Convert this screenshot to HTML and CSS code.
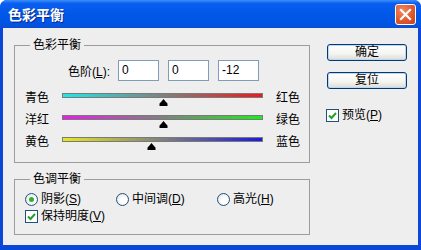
FILE: index.html
```html
<!DOCTYPE html>
<html>
<head>
<meta charset="utf-8">
<link rel="stylesheet" href="styles.css">
</head>
<body>
<div class="window">
  <div class="titlebar">
    <span class="title">色彩平衡</span>
    <span class="close"><svg width="13" height="13" viewBox="0 0 13 13"><path d="M2 2 L11 11 M11 2 L2 11" stroke="#fff" stroke-width="2.2" stroke-linecap="square"/></svg></span>
  </div>
  <div class="client">
    <div class="left">
      <div class="group g1">
        <span class="legend">色彩平衡</span>
        <div class="levels">
          <span class="lv-label">色阶(<u>L</u>):</span>
          <span class="field">0</span>
          <span class="field">0</span>
          <span class="field">-12</span>
        </div>
        <div class="sliders">
          <div class="srow">
            <span>青色</span>
            <div class="track t-cr"><svg class="thumb" style="left:96px" width="9" height="7" viewBox="0 0 9 7"><path d="M4.5 0 L7 3 L8.5 4.5 L8.5 7 L0.5 7 L0.5 4.5 L2 3 Z" fill="#000"/></svg></div>
            <span class="rlab">红色</span>
          </div>
          <div class="srow">
            <span>洋红</span>
            <div class="track t-mg"><svg class="thumb" style="left:96px" width="9" height="7" viewBox="0 0 9 7"><path d="M4.5 0 L7 3 L8.5 4.5 L8.5 7 L0.5 7 L0.5 4.5 L2 3 Z" fill="#000"/></svg></div>
            <span class="rlab">绿色</span>
          </div>
          <div class="srow">
            <span>黄色</span>
            <div class="track t-yb"><svg class="thumb" style="left:84px" width="9" height="7" viewBox="0 0 9 7"><path d="M4.5 0 L7 3 L8.5 4.5 L8.5 7 L0.5 7 L0.5 4.5 L2 3 Z" fill="#000"/></svg></div>
            <span class="rlab">蓝色</span>
          </div>
        </div>
      </div>
      <div class="group g2">
        <span class="legend">色调平衡</span>
        <div class="radios">
          <span class="opt"><span class="radio on"></span>阴影(<u>S</u>)</span>
          <span class="opt"><span class="radio"></span>中间调(<u>D</u>)</span>
          <span class="opt"><span class="radio"></span>高光(<u>H</u>)</span>
        </div>
        <div class="keep">
          <span class="opt"><span class="check"><svg width="11" height="11" viewBox="0 0 11 11"><path d="M2 5.5 L4.5 8 L9 3" fill="none" stroke="#21a121" stroke-width="2"/></svg></span>保持明度(<u>V</u>)</span>
        </div>
      </div>
    </div>
    <div class="right">
      <div class="btn">确定</div>
      <div class="btn btn2">复位</div>
      <div class="preview opt"><span class="check"><svg width="11" height="11" viewBox="0 0 11 11"><path d="M2 5.5 L4.5 8 L9 3" fill="none" stroke="#21a121" stroke-width="2"/></svg></span>预览(<u>P</u>)</div>
    </div>
  </div>
</div>
</body>
</html>
```

FILE: styles.css
```css
html, body {
  margin: 0;
  padding: 0;
}
body {
  font-family: "Liberation Sans", "Noto Sans CJK SC", sans-serif;
  font-size: 12px;
  color: #000;
  background: #fff;
}
.window {
  width: 421px;
  height: 250px;
  background: #0a46d8;
  border-radius: 7px 7px 0 0;
  display: flex;
  flex-direction: column;
  overflow: hidden;
}
.titlebar {
  height: 28px;
  flex: none;
  display: flex;
  align-items: center;
  padding-left: 8px;
  background: linear-gradient(#3d8ff8 0%, #0a5ff0 12%, #0057e8 50%, #0054e3 85%, #0a4fd4 100%);
}
.title {
  color: #fff;
  font-weight: bold;
  font-size: 14px;
  letter-spacing: 0px;
  text-shadow: 1px 1px 0 #0c2a8a;
}
.close {
  margin-left: auto;
  margin-right: 5px;
  width: 21px;
  height: 21px;
  box-sizing: border-box;
  border: 1px solid #fff;
  border-radius: 3px;
  background: radial-gradient(circle at 35% 30%, #f08a62 0%, #e0582e 55%, #c8401c 100%);
  display: flex;
  align-items: center;
  justify-content: center;
}
.client {
  margin: 0 3px;
  height: 217px;
  background: #eeeeee;
  display: flex;
  box-sizing: border-box;
  padding: 16px 0 0 11px;
}
.left {
  width: 296px;
  margin-top: 1px;
  display: flex;
  flex-direction: column;
  gap: 16px;
}
.group {
  position: relative;
  border: 1px solid #9c9c9c;
  box-sizing: border-box;
}
.legend {
  position: absolute;
  top: -8px;
  left: 15px;
  padding: 0 3px;
  line-height: 14px;
  background: #eeeeee;
}
.g1 {
  height: 118px;
  padding-top: 14px;
}
.levels {
  display: flex;
  align-items: center;
  height: 21px;
}
.lv-label {
  width: 95px;
  text-align: right;
  margin-right: 8px;
}
.field {
  width: 41px;
  height: 21px;
  box-sizing: border-box;
  border: 1px solid #7f9db9;
  background: #fff;
  padding-left: 3px;
  line-height: 19px;
  margin-right: 9px;
}
.sliders {
  margin-top: 10px;
  padding-left: 10px;
}
.srow {
  display: grid;
  grid-template-columns: 37px 201px auto;
  align-items: start;
  height: 22px;
  line-height: 14px;
}
.rlab {
  margin-left: 13px;
}
.track {
  position: relative;
  height: 5px;
  margin-top: 2px;
  box-sizing: border-box;
  border: 1px solid #7a7a7a;
}
.t-cr { background: linear-gradient(to right, #1ee8e8, #808080 50%, #ee1a1a); }
.t-mg { background: linear-gradient(to right, #e81ee8, #808080 50%, #1aee1a); }
.t-yb { background: linear-gradient(to right, #e8e81e, #808080 50%, #1a1ae0); }
.thumb {
  position: absolute;
  top: 5px;
  display: block;
}
.g2 {
  height: 56px;
  padding-top: 12px;
}
.radios {
  display: grid;
  grid-template-columns: 91px 101px auto;
  padding-left: 10px;
  line-height: 14px;
}
.opt {
  display: flex;
  align-items: center;
  line-height: 14px;
}
.radio {
  width: 13px;
  height: 13px;
  box-sizing: border-box;
  border: 1px solid #1c5180;
  border-radius: 50%;
  background: radial-gradient(circle at 60% 60%, #ffffff 30%, #dcdcd6 100%);
  margin-right: 3px;
  position: relative;
}
.radio.on::after {
  content: "";
  position: absolute;
  left: 3px;
  top: 3px;
  width: 5px;
  height: 5px;
  border-radius: 50%;
  background: #2fb02f;
}
.keep {
  margin-top: 3px;
  padding-left: 10px;
}
.check {
  width: 13px;
  height: 13px;
  box-sizing: border-box;
  border: 1px solid #1c5180;
  background: #fff;
  margin-right: 3px;
  display: flex;
  align-items: center;
  justify-content: center;
}
.right {
  margin-left: 17px;
  width: 80px;
  display: flex;
  flex-direction: column;
}
.btn {
  height: 17px;
  box-sizing: border-box;
  border: 1px solid #003c74;
  border-radius: 3px;
  background: linear-gradient(#ffffff, #f4f4f0 60%, #dcdcd4);
  box-shadow: inset 0 0 0 1px #c2d4f4;
  text-align: center;
  line-height: 15px;
}
.btn2 {
  margin-top: 11px;
}
.preview {
  margin-top: 19px;
  margin-left: -1px;
}
```
